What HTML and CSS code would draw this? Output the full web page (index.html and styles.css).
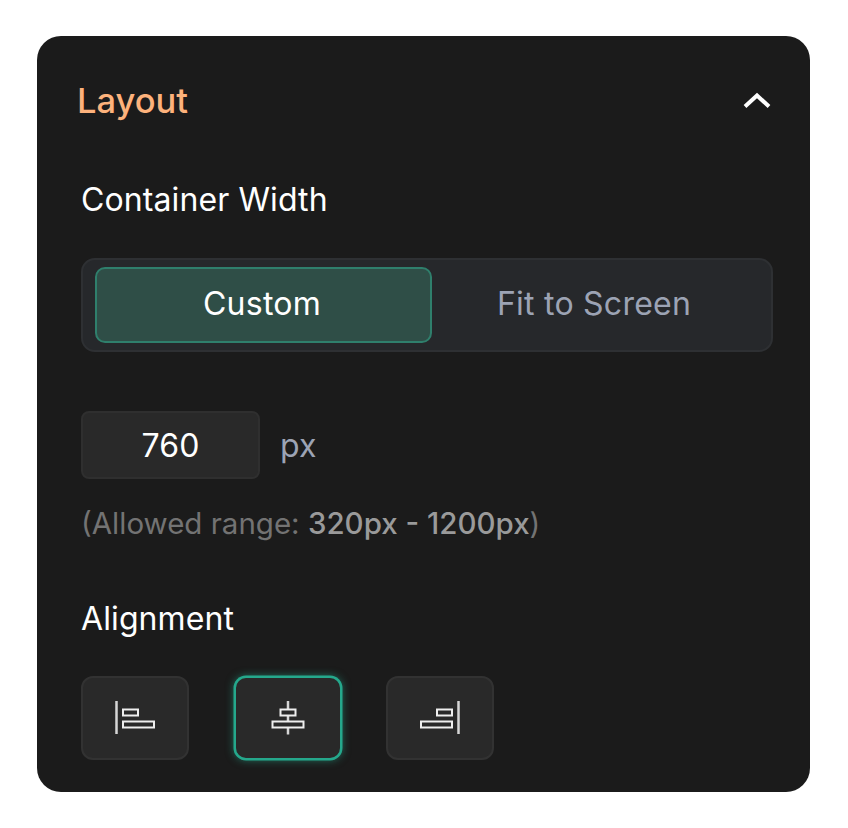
FILE: index.html
```html
<!DOCTYPE html>
<html lang="en">
<head>
<meta charset="utf-8">
<title>Layout</title>
<link rel="stylesheet" href="styles.css">
</head>
<body>
<section class="card">
  <header class="head">
    <h2 class="title">Layout</h2>
    <svg class="chev" width="28" height="18" viewBox="0 0 28 18"><path d="M2 14.500 L14 3.500 L26 14.500" fill="none" stroke="#fff" stroke-width="4"/></svg>
  </header>
  <div class="label first">Container Width</div>
  <div class="seg">
    <button class="opt on">Custom</button>
    <button class="opt">Fit to Screen</button>
  </div>
  <div class="width">
    <div class="num">760</div>
    <span class="unit">px</span>
  </div>
  <p class="hint">(Allowed range: <b>320px - 1200px</b>)</p>
  <div class="label second">Alignment</div>
  <div class="aligns">
    <button class="al">
      <svg width="42" height="36" viewBox="0 0 42 36"><path d="M2.5 1v33" class="ln"/><rect x="9" y="9.5" width="15" height="6" class="bx"/><rect x="9" y="21.5" width="31" height="6" class="bx"/></svg>
    </button>
    <button class="al act">
      <svg width="42" height="36" viewBox="0 0 42 36"><path d="M21 1v8M21 15.500v6M21 27.500v7" class="ln"/><rect x="13.500" y="9.500" width="15" height="6" class="bx"/><rect x="5.500" y="21.500" width="31" height="6" class="bx"/></svg>
    </button>
    <button class="al">
      <svg width="42" height="36" viewBox="0 0 42 36"><path d="M39.500 1v33" class="ln"/><rect x="18" y="9.500" width="15" height="6" class="bx"/><rect x="2" y="21.500" width="31" height="6" class="bx"/></svg>
    </button>
  </div>
</section>
</body>
</html>
```
FILE: styles.css
```css
* { box-sizing: border-box; }
html, body { margin: 0; background: #fff; }
body { padding: 36px 38px 36px 37px; font-family: Inter, sans-serif; }
.card { width: 773px; height: 756px; background: #1b1b1b; border-radius: 24px; padding: 44px 37px 0 44px; }
.head { display: flex; justify-content: space-between; align-items: center; height: 42px; margin-left: -4px; }
.title { margin: 0; font-size: 34.500px; font-weight: 500; line-height: 42px; color: #fdb27c; }
.chev { display: block; margin-right: 2px; }
.label { color: #fff; font-size: 32px; font-weight: 400; line-height: 40px; letter-spacing: .1px; }
.first { margin-top: 58px; }
.second { margin-top: 56px; }
.seg { display: flex; margin-top: 38px; height: 94px; padding: 7px 12px; background: #26282b; border: 2px solid #2e3033; border-radius: 14px; }
.opt { flex: 1; border: 0; background: none; font: 400 32px/1 Inter, sans-serif; letter-spacing: .25px; color: #9ca3b4; border-radius: 10px; padding: 0 3px 3px 0; }
.opt.on { flex: 0 0 337px; color: #fff; background: #2f4e47; border: 2px solid #2f7f6c; }
.width { display: flex; align-items: center; margin-top: 59px; gap: 20px; }
.num { width: 179px; height: 68px; display: flex; align-items: center; justify-content: center; background: #292929; border: 2px solid #2f2f2f; border-radius: 8px; color: #fff; font-size: 32px; font-weight: 400; letter-spacing: .2px; }
.unit { color: #9ca3b4; font-size: 32px; font-weight: 400; }
.hint { margin: 24px 0 0; color: #737373; font-size: 29.500px; line-height: 40px; font-weight: 400; }
.hint b { color: #9a9a9a; font-weight: 500; }
.aligns { display: flex; gap: 44.500px; margin-top: 37px; }
.al { width: 108px; height: 84px; display: flex; align-items: center; justify-content: center; padding: 0; background: #292929; border: 2px solid #323232; border-radius: 12px; }
.al.act { border-color: #25a88c; box-shadow: 0 0 0 .5px #25a88c, 0 0 8px rgba(37,168,140,.6); }
.ln { fill: none; stroke: #d6d6d6; stroke-width: 2.500; }
.bx { fill: none; stroke: #eee; stroke-width: 2; }
```
